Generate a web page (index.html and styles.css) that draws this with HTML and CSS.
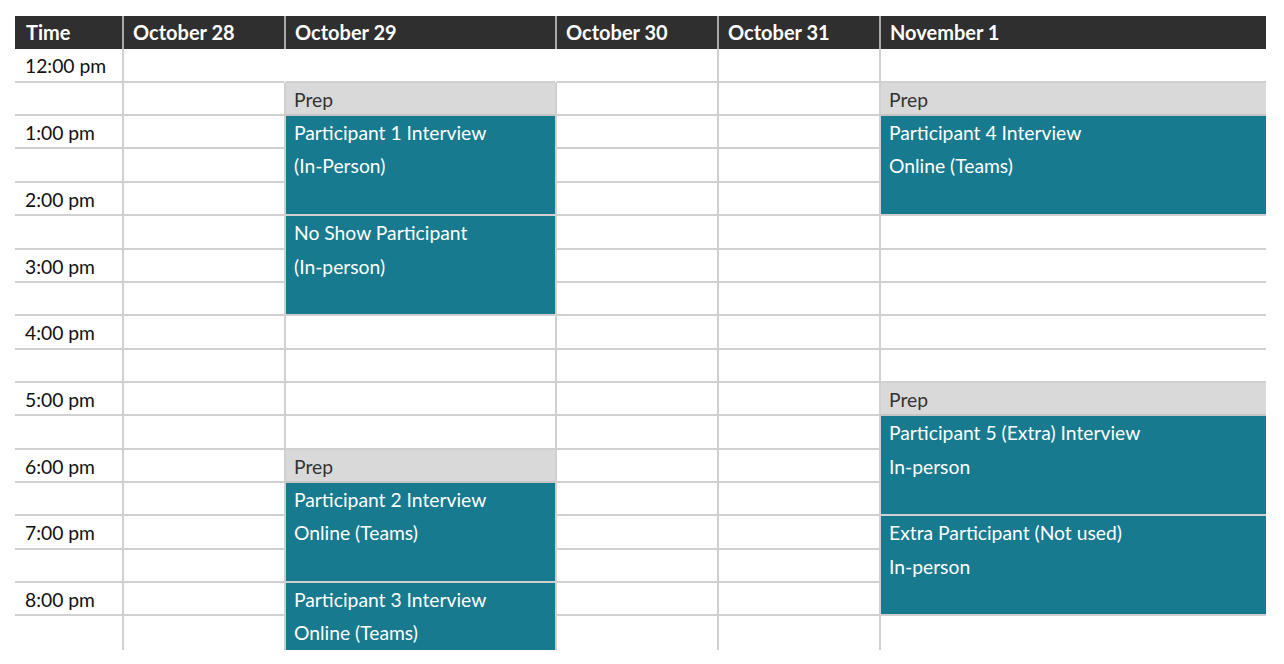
FILE: index.html
```html
<!DOCTYPE html>
<html>
<head>
<meta charset="utf-8">
<link rel="stylesheet" href="styles.css">
</head>
<body>
<div class="page">
  <div class="sched">
    <div class="hd first">Time</div>
    <div class="hd">October 28</div>
    <div class="hd">October 29</div>
    <div class="hd">October 30</div>
    <div class="hd">October 31</div>
    <div class="hd">November 1</div>

    <div class="t">12:00 pm</div><div class="c"></div><div class="c nl"></div><div class="c nl"></div><div class="c"></div><div class="c"></div>
    <div class="t"></div><div class="c"></div><div class="c prep">Prep</div><div class="c"></div><div class="c"></div><div class="c prep">Prep</div>
    <div class="t">1:00 pm</div><div class="c"></div><div class="c ev s3"><span>Participant 1 Interview</span><span>(In-Person)</span></div><div class="c"></div><div class="c"></div><div class="c ev s3"><span>Participant 4 Interview</span><span>Online (Teams)</span></div>
    <div class="t"></div><div class="c"></div><div class="c"></div><div class="c"></div>
    <div class="t">2:00 pm</div><div class="c"></div><div class="c"></div><div class="c"></div>
    <div class="t"></div><div class="c"></div><div class="c ev s3"><span>No Show Participant</span><span>(In-person)</span></div><div class="c"></div><div class="c"></div><div class="c"></div>
    <div class="t">3:00 pm</div><div class="c"></div><div class="c"></div><div class="c"></div><div class="c"></div>
    <div class="t"></div><div class="c"></div><div class="c"></div><div class="c"></div><div class="c"></div>
    <div class="t">4:00 pm</div><div class="c"></div><div class="c"></div><div class="c"></div><div class="c"></div><div class="c"></div>
    <div class="t"></div><div class="c"></div><div class="c"></div><div class="c"></div><div class="c"></div><div class="c"></div>
    <div class="t">5:00 pm</div><div class="c"></div><div class="c"></div><div class="c"></div><div class="c"></div><div class="c prep">Prep</div>
    <div class="t"></div><div class="c"></div><div class="c"></div><div class="c"></div><div class="c"></div><div class="c ev s3"><span>Participant 5 (Extra) Interview</span><span>In-person</span></div>
    <div class="t">6:00 pm</div><div class="c"></div><div class="c prep">Prep</div><div class="c"></div><div class="c"></div>
    <div class="t"></div><div class="c"></div><div class="c ev s3"><span>Participant 2 Interview</span><span>Online (Teams)</span></div><div class="c"></div><div class="c"></div>
    <div class="t">7:00 pm</div><div class="c"></div><div class="c"></div><div class="c"></div><div class="c ev s3"><span>Extra Participant (Not used)</span><span>In-person</span></div>
    <div class="t"></div><div class="c"></div><div class="c"></div><div class="c"></div>
    <div class="t">8:00 pm</div><div class="c"></div><div class="c ev s2 last"><span>Participant 3 Interview</span><span>Online (Teams)</span></div><div class="c"></div><div class="c"></div>
    <div class="t last"></div><div class="c last"></div><div class="c last"></div><div class="c last"></div><div class="c last"></div>
  </div>
</div>
</body>
</html>
```

FILE: styles.css
```css
html, body {
  margin: 0;
  padding: 0;
  background: #ffffff;
}

.page {
  padding: 16px 0 0 15px;
  height: 648px;
  overflow: hidden;
}

.sched {
  display: grid;
  grid-template-columns: 107px 162px 271px 162px 162px 387px;
  grid-template-rows: repeat(19, 33.37px);
  width: 1251px;
  font-family: Lato, "Liberation Sans", sans-serif;
  font-size: 19.3px;
  color: #111111;
}

.hd {
  box-sizing: border-box;
  background: #2f2f2f;
  color: #ffffff;
  font-weight: 700;
  font-size: 20px;
  line-height: 32px;
  padding-left: 9px;
  border-left: 2px solid #a9a9a9;
  white-space: nowrap;
}

.hd.first {
  border-left: none;
  padding-left: 11px;
}

.t {
  box-sizing: border-box;
  border-bottom: 2px solid #d0d0d0;
  padding-left: 10px;
  line-height: 33px;
  white-space: nowrap;
}

.c {
  box-sizing: border-box;
  border-bottom: 2px solid #d0d0d0;
  border-left: 2px solid #d0d0d0;
  padding-left: 8px;
  line-height: 33px;
  white-space: nowrap;
}

.c.nl {
  border-left-color: transparent;
}

.last {
  border-bottom: none;
}

.prep {
  background: #d9d9d9;
  color: #333333;
  border-bottom-color: #c6c6c6;
}

.ev {
  background: #177a8f;
  color: #ffffff;
  display: flex;
  flex-direction: column;
}

.ev span {
  line-height: 33px;
  height: 33.37px;
}

.s3 {
  grid-row: span 3;
}

.s2 {
  grid-row: span 2;
}
```
